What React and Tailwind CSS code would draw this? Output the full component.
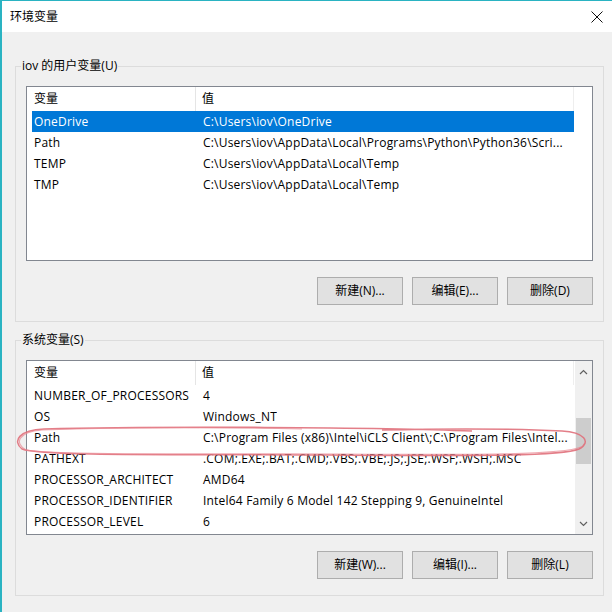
const font = { fontFamily: '"Open Sans", "Noto Sans CJK SC", sans-serif' };

const userVars = [
  { name: 'OneDrive', value: 'C:\\Users\\iov\\OneDrive', selected: true },
  { name: 'Path', value: 'C:\\Users\\iov\\AppData\\Local\\Programs\\Python\\Python36\\Scri...' },
  { name: 'TEMP', value: 'C:\\Users\\iov\\AppData\\Local\\Temp' },
  { name: 'TMP', value: 'C:\\Users\\iov\\AppData\\Local\\Temp' },
];

const sysVars = [
  { name: 'NUMBER_OF_PROCESSORS', value: '4' },
  { name: 'OS', value: 'Windows_NT' },
  { name: 'Path', value: 'C:\\Program Files (x86)\\Intel\\iCLS Client\\;C:\\Program Files\\Intel...' },
  { name: 'PATHEXT', value: '.COM;.EXE;.BAT;.CMD;.VBS;.VBE;.JS;.JSE;.WSF;.WSH;.MSC' },
  { name: 'PROCESSOR_ARCHITECT', value: 'AMD64' },
  { name: 'PROCESSOR_IDENTIFIER', value: 'Intel64 Family 6 Model 142 Stepping 9, GenuineIntel' },
  { name: 'PROCESSOR_LEVEL', value: '6' },
];

const Button = ({ children }) => (
  <button className="w-[86px] h-[28px] bg-[#e1e1e1] border border-[#adadad] text-[12px] text-black flex items-center justify-center">
    {children}
  </button>
);

const VarList = ({ rows, scroll }) => (
  <div className="relative h-[175px] border border-[#828790] bg-white overflow-hidden">
    <div className="flex h-[24px] items-center text-[12px] text-black">
      <div className="w-[169px] h-full pl-[7px] flex items-center border-r border-[#e5e5e5]">变量</div>
      <div className="w-[378px] h-full pl-[6px] flex items-center border-r border-[#eeeeee]">值</div>
    </div>
    <div className="pl-[5px]">
      {rows.map((r) => (
        <div
          key={r.name}
          className={`flex h-[21px] w-[542px] items-center text-[12px] tracking-[0.2px] whitespace-nowrap ${
            r.selected ? 'bg-[#0078d7] text-white' : 'text-black'
          }`}
        >
          <div className="w-[164px] pl-[2px] overflow-hidden">{r.name}</div>
          <div className="pl-[7px] overflow-hidden">{r.value}</div>
        </div>
      ))}
    </div>
    {scroll && (
      <div className="absolute right-0 top-0 bottom-0 w-[17px] bg-[#f0f0f0] flex flex-col items-center">
        <div className="h-[21px] flex items-center justify-center">
          <svg width="9" height="6" viewBox="0 0 9 6">
            <path d="M1 5 L4.5 1.5 L8 5" fill="none" stroke="#606060" strokeWidth="1.2" />
          </svg>
        </div>
        <div className="mt-[36px] w-[15px] h-[46px] bg-[#cdcdcd]" />
        <div className="flex-1" />
        <div className="h-[21px] flex items-center justify-center">
          <svg width="9" height="6" viewBox="0 0 9 6">
            <path d="M1 1 L4.5 4.5 L8 1" fill="none" stroke="#606060" strokeWidth="1.2" />
          </svg>
        </div>
      </div>
    )}
  </div>
);

const Group = ({ title, rows, scroll, buttons, className }) => (
  <fieldset className={`w-[589px] ml-[13px] border border-[#dcdcdc] p-0 m-0 ${className}`}>
    <legend className="ml-[5px] px-[1px] text-[12px] leading-[16px] text-black">{title}</legend>
    <div className="px-[10px] pt-[12px] pb-[16px]">
      <VarList rows={rows} scroll={scroll} />
      <div className="mt-[16px] flex justify-end gap-[9px]">
        {buttons.map((b) => (
          <Button key={b}>{b}</Button>
        ))}
      </div>
    </div>
  </fieldset>
);

export default function App() {
  return (
    <div
      className="relative w-[612px] h-[612px] overflow-hidden bg-[#f0f0f0] border-l-2 border-t border-[#2ab3c2]"
      style={font}
    >
      <div className="h-[31px] bg-white flex items-center justify-between pl-[8px] pr-[9px] text-[12px] text-black">
        <span>环境变量</span>
        <svg width="12" height="12" viewBox="0 0 12 12">
          <path d="M0.5 0.5 L11.5 11.5 M11.5 0.5 L0.5 11.5" stroke="#111" strokeWidth="1" />
        </svg>
      </div>

      <Group
        title="iov 的用户变量(U)"
        rows={userVars}
        buttons={['新建(N)...', '编辑(E)...', '删除(D)']}
        className="mt-[26px]"
      />
      <Group
        title="系统变量(S)"
        rows={sysVars}
        scroll
        buttons={['新建(W)...', '编辑(I)...', '删除(L)']}
        className="mt-[10px]"
      />

      {/* hand-drawn mark around the Path row */}
      <svg className="absolute left-0 top-0 pointer-events-none" width="612" height="612" viewBox="0 0 612 612">
        <path
          d="M470 430 C380 426 150 425 42 428 C17 429 10 440 20 448 C40 456 200 453 320 454 C450 455 558 456 577 448 C590 441 582 431 560 430 C500 427 420 428 380 429"
          fill="none"
          stroke="#e0707b"
          strokeWidth="1.5"
          opacity="0.9"
        />
        <path
          d="M300 428 C200 426 100 427 40 429 C16 431 12 442 24 449 C60 455 250 452 340 453 C470 454 560 454 579 446"
          fill="none"
          stroke="#e88690"
          strokeWidth="1.1"
          opacity="0.7"
        />
      </svg>
    </div>
  );
}
